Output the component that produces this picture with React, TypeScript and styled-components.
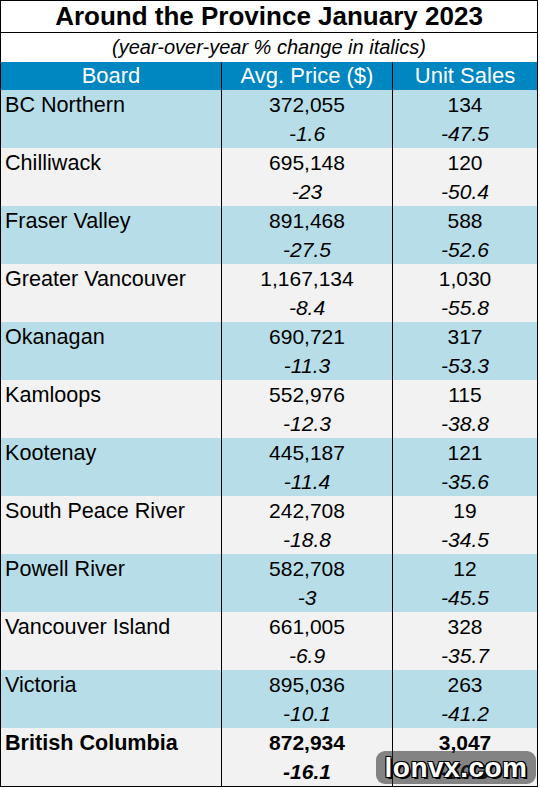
import styled, { createGlobalStyle } from "styled-components";

const GlobalStyle = createGlobalStyle`
  html, body {
    margin: 0;
    padding: 0;
    background: #ffffff;
  }
  body {
    font-family: "Liberation Sans", Arial, sans-serif;
    color: #000000;
  }
`;

type BoardRow = {
  board: string;
  price: string;
  priceChange: string;
  sales: string;
  salesChange: string;
  total?: boolean;
};

const rows: BoardRow[] = [
  { board: "BC Northern", price: "372,055", priceChange: "-1.6", sales: "134", salesChange: "-47.5" },
  { board: "Chilliwack", price: "695,148", priceChange: "-23", sales: "120", salesChange: "-50.4" },
  { board: "Fraser Valley", price: "891,468", priceChange: "-27.5", sales: "588", salesChange: "-52.6" },
  { board: "Greater Vancouver", price: "1,167,134", priceChange: "-8.4", sales: "1,030", salesChange: "-55.8" },
  { board: "Okanagan", price: "690,721", priceChange: "-11.3", sales: "317", salesChange: "-53.3" },
  { board: "Kamloops", price: "552,976", priceChange: "-12.3", sales: "115", salesChange: "-38.8" },
  { board: "Kootenay", price: "445,187", priceChange: "-11.4", sales: "121", salesChange: "-35.6" },
  { board: "South Peace River", price: "242,708", priceChange: "-18.8", sales: "19", salesChange: "-34.5" },
  { board: "Powell River", price: "582,708", priceChange: "-3", sales: "12", salesChange: "-45.5" },
  { board: "Vancouver Island", price: "661,005", priceChange: "-6.9", sales: "328", salesChange: "-35.7" },
  { board: "Victoria", price: "895,036", priceChange: "-10.1", sales: "263", salesChange: "-41.2" },
  { board: "British Columbia", price: "872,934", priceChange: "-16.1", sales: "3,047", salesChange: "-50.3", total: true },
];

const App = () => {
  return (
    <>
      <GlobalStyle />
      <Sheet>
        <TitleRow>Around the Province January 2023</TitleRow>
        <SubtitleRow>(year-over-year % change in italics)</SubtitleRow>
        <Grid>
          <HeadCell>Board</HeadCell>
          <HeadCell $divider>Avg. Price ($)</HeadCell>
          <HeadCell $divider>Unit Sales</HeadCell>
          {rows.map((row, i) => {
            const shade = i % 2 === 0 ? "#b7dee8" : "#f2f2f2";
            return [
              <BoardCell key={row.board + "-b"} $bg={shade} $bold={row.total}>
                {row.board}
              </BoardCell>,
              <ValueCell key={row.board + "-p"} $bg={shade} $bold={row.total} $divider>
                <span>{row.price}</span>
                <em>{row.priceChange}</em>
              </ValueCell>,
              <ValueCell key={row.board + "-s"} $bg={shade} $bold={row.total} $divider>
                <span>{row.sales}</span>
                <em>{row.salesChange}</em>
              </ValueCell>,
            ];
          })}
        </Grid>
        <Watermark>lonvx.com</Watermark>
      </Sheet>
    </>
  );
};

const Sheet = styled.div`
  position: relative;
  width: 538px;
  box-sizing: border-box;
  border: 1px solid #000000;
  background: #ffffff;
`;

const TitleRow = styled.div`
  height: 31px;
  border-bottom: 1px solid #000000;
  display: flex;
  align-items: center;
  justify-content: center;
  font-size: 26px;
  font-weight: bold;
  line-height: 31px;
`;

const SubtitleRow = styled.div`
  height: 29px;
  display: flex;
  align-items: center;
  justify-content: center;
  font-size: 20px;
  font-style: italic;
  line-height: 29px;
`;

const Grid = styled.div`
  display: grid;
  grid-template-columns: 220px 171px 1fr;
`;

const HeadCell = styled.div<{ $divider?: boolean }>`
  height: 28px;
  background: #0086c0;
  color: #ffffff;
  font-size: 22px;
  line-height: 28px;
  text-align: center;
  border-left: ${(p) => (p.$divider ? "1px solid #000000" : "none")};
`;

const BoardCell = styled.div<{ $bg: string; $bold?: boolean }>`
  height: 58px;
  background: ${(p) => p.$bg};
  font-size: 21.6px;
  font-weight: ${(p) => (p.$bold ? "bold" : "normal")};
  line-height: 29px;
  padding-left: 4px;
  white-space: nowrap;
`;

const ValueCell = styled.div<{ $bg: string; $bold?: boolean; $divider?: boolean }>`
  height: 58px;
  background: ${(p) => p.$bg};
  border-left: ${(p) => (p.$divider ? "1px solid #000000" : "none")};
  display: flex;
  flex-direction: column;
  align-items: center;
  font-size: 21px;
  font-weight: ${(p) => (p.$bold ? "bold" : "normal")};
  line-height: 29px;
  em {
    font-style: italic;
  }
`;

const Watermark = styled.div`
  position: absolute;
  right: 1px;
  bottom: 2px;
  width: 160px;
  height: 33px;
  border-radius: 9px;
  background: rgba(40, 40, 40, 0.55);
  display: flex;
  align-items: center;
  justify-content: center;
  color: #ffffff;
  font-size: 28px;
  font-weight: bold;
  letter-spacing: 0.5px;
  text-shadow: -1px -1px 0 #000, 1px -1px 0 #000, -1px 1px 0 #000, 1px 1px 0 #000, 2px 2px 0 #000;
`;

export default App;
